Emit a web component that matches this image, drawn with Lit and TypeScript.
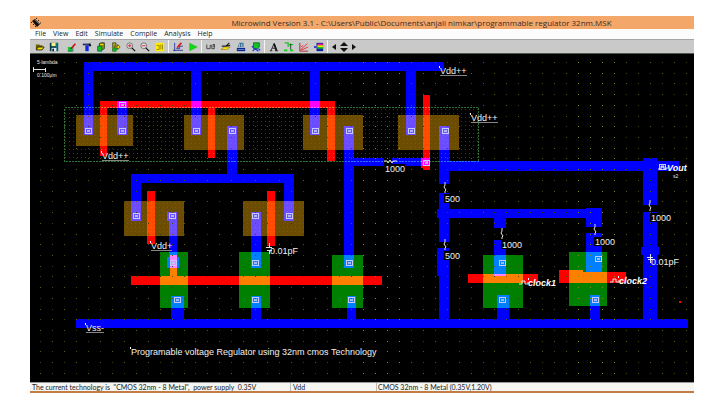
import { LitElement, html, svg, css } from "lit";
import { customElement } from "lit/decorators.js";

type Box = [number, number, number, number]; // left, top, right, bottom

const METAL: Box[] = [
  [84, 62, 444, 71], [84, 71, 93, 135], [191, 71, 201, 135], [310, 71, 320, 135], [406, 71, 416, 135],
  [117, 101, 127, 135], [227, 126, 237, 174],
  [344, 126, 354, 268], [354, 158, 384, 166], [392, 158, 430, 166],
  [439, 126, 449, 184], [449, 161, 679, 171],
  [439, 193, 449, 209], [437, 209, 586, 218], [439, 218, 449, 242], [437, 248, 449, 276], [439, 276, 449, 319],
  [494, 218, 506, 228], [494, 240, 506, 276], [497, 295, 509, 319],
  [586, 208, 602, 227], [586, 233, 602, 272], [590, 295, 600, 319],
  [643, 158, 657, 161], [643, 171, 657, 205], [643, 212, 657, 247], [641, 247, 659, 255], [643, 255, 657, 319],
  [131, 174, 294, 183], [131, 183, 141, 221], [284, 183, 294, 221],
  [167, 212, 177, 221], [169, 221, 177, 257], [167, 257, 179, 268], [251, 212, 261, 268],
  [171, 296, 184, 319], [251, 296, 261, 319], [347, 296, 356, 319],
  [76, 319, 688, 328],
];
const POLY: Box[] = [
  [100, 101, 335, 108], [100, 108, 107, 156], [208, 108, 215, 158], [327, 108, 335, 161],
  [423, 95, 430, 170], [421, 158, 423, 168],
  [147, 191, 155, 244], [267, 191, 275, 246],
  [131, 276, 382, 285], [170, 255, 177, 276],
  [468, 274, 538, 283], [559, 270, 583, 283], [583, 272, 626, 283],
  [679, 301, 681, 303],
];
const PDIFF: Box[] = [
  [76, 115, 133, 146], [184, 115, 244, 150], [303, 115, 363, 150], [398, 115, 459, 150],
  [124, 201, 184, 236], [243, 201, 304, 236],
];
const NDIFF: Box[] = [
  [160, 252, 188, 308], [239, 252, 270, 308], [332, 255, 363, 308], [483, 255, 523, 308], [569, 252, 607, 306],
];
const CONTACTS: [number, number][] = [
  [88, 131], [122, 131], [122, 105], [196, 131], [232, 131], [315, 131], [349, 131], [411, 131], [445, 131], [426, 163],
  [136, 216], [172, 216], [255, 216], [289, 216], [173, 263], [255, 263], [349, 263],
  [177, 300], [255, 300], [351, 300], [502, 263], [502, 300], [598, 259], [595, 300], [662, 167],
];
const SUPPLIES: [string, number, number, number][] = [
  ["Vdd++", 440, 74, 27], ["Vdd++", 471, 121, 27], ["Vdd++", 102, 159, 27], ["Vdd+", 151, 249, 21], ["Vss-", 86, 331, 18],
];
const VALUES: [string, number, number, number][] = [
  ["1000", 385, 172, 20], ["500", 445, 202, 15], ["500", 445, 259, 15], ["1000", 502, 248, 20],
  ["1000", 595, 245, 20], ["1000", 651, 221, 20],
];
const PLAIN: [string, number, number][] = [
  ["0.01pF", 270, 254], ["0.01pF", 651, 265], ["Programable voltage Regulator using 32nm cmos Technology", 131, 355],
];
const SIGNALS: [string, number, number][] = [["clock1", 528, 286], ["clock2", 619, 284], ["Vout", 667, 171]];
const ZIGZAGS: [number, number][] = [[445, 182], [445, 239], [502, 228], [595, 224], [650, 200]];

const MENUS = ["File", "View", "Edit", "Simulate", "Compile", "Analysis", "Help"];

// Each icon is drawn on a 12 x 12 grid.
const ICONS: Record<string, unknown> = {
  Open: svg`<path d="M1 3h4l1 1h3v2H5L3 9H1z" fill="#6b6400"/><path d="M3.500 6H11L8.500 9.500H1.500z" fill="#ffe600" stroke="#111"/>`,
  Save: svg`<path d="M1 1h10v10H1z" fill="#063c46"/><path d="M3 1h5v4H3z" fill="#f7f08a"/><path d="M3 7h6v4H3z" fill="#e8e8e8"/><path d="M9 1h1v9H9z" fill="#18b5c8"/><path d="M4 8h2v3H4z" fill="#123"/>`,
  Draw: svg`<path d="M1 6h5v5H1z" fill="#18c428"/><path d="M1 11h6V6" fill="none" stroke="#063"/><path d="M6 7l4-5" stroke="#d40c1c" stroke-width="2"/><path d="M4 8l2-1" stroke="#111"/>`,
  Delete: svg`<path d="M1 2h9l1 2v1H8V4H1z" fill="#111"/><path d="M2 2h6v1H2z" fill="#46d"/><path d="M4 4h4v7H4z" fill="#0b28e6"/><path d="M7 4l3-3" stroke="#333"/>`,
  Copy: svg`<path d="M4 2l2-1h4v7l-2 1H4z" fill="#9a9600" stroke="#232"/><path d="M2 5h5v6H2z" fill="#12c41e" stroke="#064"/><path d="M5 3h4" stroke="#ffe600"/>`,
  Move: svg`<path d="M2 1h4v10H2z" fill="#b4aa00" stroke="#443"/><path d="M2 7h5v4H2z" fill="#12b81e"/><path d="M4 5h4V3l3 3-3 3V7H4z" fill="#ffe600" stroke="#111" stroke-width=".7"/>`,
  "Zoom in": svg`<circle cx="4.500" cy="4.500" r="3.500" fill="#ddd" stroke="#666"/><path d="M2.500 4.500h4M4.500 2.500v4" stroke="#d4102a"/><path d="M7 7l4 4" stroke="#111" stroke-width="1.500"/>`,
  "Zoom out": svg`<circle cx="4.500" cy="4.500" r="3.500" fill="#ddd" stroke="#666"/><path d="M2.500 4.500h4" stroke="#d4102a"/><path d="M7 7l4 4" stroke="#111" stroke-width="1.500"/>`,
  "View all": svg`<path d="M1 1h10v10H1z" fill="#ffee00"/><path d="M2 4h3v5H2M7 3v6M9 3v6" fill="none" stroke="#8a7c00"/>`,
  Simulate: svg`<path d="M2 1v10M0 10h12M4 8h4V5h4" fill="none" stroke="#1a2c9a"/><path d="M5 7l5-6" stroke="#e01020" stroke-width="2"/>`,
  Run: svg`<path d="M2 1.500l9 4.500-9 4.500z" fill="#0cdc14" stroke="#1a9c20" stroke-width=".5"/>`,
  Measure: svg`<path d="M1 3v5h4V4h2v4M7 8h3M8 3h2v2H8M10 3v5" fill="none" stroke="#333"/>`,
  "Cut view": svg`<path d="M0 9l4-3h7L7 9z" fill="#ffe000" stroke="#665c00" stroke-width=".5"/><path d="M1 5h5l4-4M6 5l5-1" fill="none" stroke="#222" stroke-width="1.500"/>`,
  "3D view": svg`<path d="M2 6l2-5h5v5z" fill="#3a6f94"/><path d="M1 7h10v4H1z" fill="#10208c"/><path d="M4 2v4M7 2v4" stroke="#cde"/><path d="M2 9h8" stroke="#69c"/>`,
  Check: svg`<path d="M3 1h7v5l-2 2H3z" fill="#14c422" stroke="#063"/><path d="M1 5l2 2M2 11l3-3 4 3M9 8l2 2" stroke="#2334d8" fill="none" stroke-width="1.500"/>`,
  Text: svg`<path d="M1 10.500h3M7 10.500h4M2.500 10L6 2l3 8M4 7.500h4" fill="none" stroke="#111"/><path d="M6 2l3 8" stroke="#111" stroke-width="2"/>`,
  Layers: svg`<path d="M1 1h4v5M6 3h5" fill="none" stroke="#14c422" stroke-width="1.500"/><path d="M8 2v7" stroke="#222"/><path d="M0 9h4v2H0zM7 9h4v2H7z" fill="#12d41e"/>`,
  Graph: svg`<path d="M1 1v10h10" fill="none" stroke="#a01818"/><path d="M2 9l8-7M2 10l9-4M2 6l3-2" stroke="#f02030"/>`,
  Palette: svg`<path d="M3 1h8v10H3z" fill="#12269c"/><path d="M4 2h7v2H4z" fill="#e31d9a"/><path d="M4 4h7v2H4z" fill="#ffe600"/><path d="M4 6h7v2H4z" fill="#13c924"/><path d="M0 6h3" stroke="#22c" stroke-width="2"/>`,
};
const TOOL_GROUPS: string[][] = [
  ["Open", "Save"],
  ["Draw", "Delete", "Copy", "Move", "Zoom in", "Zoom out", "View all"],
  ["Simulate", "Run"],
  ["Measure", "Cut view", "3D view", "Check"],
  ["Text", "Layers", "Graph", "Palette"],
];

const boxes = (list: Box[], cls: string) =>
  list.map(([l, t, r, b]) => svg`<rect class=${cls} x=${l} y=${t} width=${r - l} height=${b - t}></rect>`);

const gridDots = () => {
  const tones = ["#3c4a10", "#5a5416", "#33420c", "#6a5a14"];
  const out = [];
  for (let row = 0; row < 30; row++) {
    for (let col = 0; col < 55; col++) {
      const x = 40 + Math.round(col * 11.96);
      const y = 62 + Math.round(row * 10.72);
      const bright = (col > 26 && col < 31) || (col > 44 && col < 49);
      out.push(svg`<rect x=${x} y=${y} width="1" height="1" fill=${bright ? "#8a8c1c" : tones[(col + row * 3) % 4]}></rect>`);
    }
  }
  return out;
};

@customElement("layout-canvas")
class LayoutCanvas extends LitElement {
  static styles = css`
    :host { display: block; background: #000; }
    .sheet { display: block; width: 100%; height: auto; font-family: "Liberation Sans", Arial, sans-serif; }
    .layer { isolation: isolate; shape-rendering: crispEdges; }
    .metal { fill: #0000ff; mix-blend-mode: screen; }
    .poly { fill: #ff0000; mix-blend-mode: screen; }
    .pdiff { fill: url(#speckle); }
    .ndiff { fill: #008000; }
    .well { fill: url(#wellDots); stroke: #2c7034; stroke-dasharray: 2 1; }
    .ink { fill: none; stroke: #e4e4e4; }
    .contact { fill: none; stroke: #c4ccff; }
    .cross { fill: none; stroke: #c4ccff; }
    .mask { fill: #000; }
    .rule { fill: #858585; }
    .label { fill: #f0f0f0; font-size: 9px; }
    .signal { fill: #fff; font-size: 9px; font-weight: bold; font-style: italic; }
    .scale { fill: #e8e8e8; font-size: 5px; }
    .tick { fill: #fff; }
  `;
  render() {
    return html`
      <svg class="sheet" viewBox="30 54 664 328" role="img" aria-label="Chip layout">
        <defs>
          <pattern id="wellDots" width="4" height="4" patternUnits="userSpaceOnUse">
            <rect x="1" y="1" width="1" height="1" fill="#164a1c"></rect>
          </pattern>
          <pattern id="speckle" width="4" height="4" patternUnits="userSpaceOnUse">
            <rect width="4" height="4" fill="#6c4c00"></rect>
            <rect x="1" y="1" width="1" height="1" fill="#8c3c10"></rect>
            <rect x="3" y="3" width="1" height="1" fill="#7c5c00"></rect>
          </pattern>
        </defs>
        <g class="layer">
          <rect class="mask" x="30" y="54" width="664" height="328"></rect>
          <rect class="well" x="64.5" y="107.5" width="414" height="54"></rect>
          ${boxes(PDIFF, "pdiff")}${boxes(NDIFF, "ndiff")}${boxes(METAL, "metal")}${boxes(POLY, "poly")}
          ${gridDots()}
        </g>
        ${CONTACTS.map(([x, y]) => svg`
          <rect class="contact" x=${x - 2.5} y=${y - 2.5} width="6" height="5"></rect>
          <path class="cross" d=${`M${x - 1} ${y - 1}l3 2m0-2l-3 2`}></path>`)}
        ${VALUES.map(([t, x, y, w]) => svg`
          <rect class="mask" x=${x - 1} y=${y - 8} width=${w + 1} height="9"></rect>
          <text class="label" x=${x} y=${y}>${t}</text>`)}
        ${ZIGZAGS.map(([x, y]) => svg`<path class="ink" d=${`M${x} ${y}v3l-1 2 2 3-1 1v2`}></path>`)}
        <path class="ink" d="M384 161h3l1 2 2-3 2 3 1-2h4"></path>
        ${SUPPLIES.map(([t, x, y, w]) => svg`
          <text class="label" x=${x} y=${y}>${t}</text>
          <rect class="rule" x=${x} y=${y + 1} width=${w} height="1"></rect>
          <rect class="tick" x=${x - 1} y=${y - 8} width="1" height="2"></rect>`)}
        ${PLAIN.map(([t, x, y]) => svg`
          <text class="label" x=${x} y=${y}>${t}</text>
          <rect class="tick" x=${x - 1} y=${y - 8} width="1" height="2"></rect>`)}
        <path class="ink" d="M266 247.500h6M267 250.500h5M269.500 243v4M269.500 251v3M647 257.500h6M648 259.500h5M650.500 254v4M650.500 260v3"></path>
        ${SIGNALS.map(([t, x, y]) => svg`
          <text class="signal" x=${x} y=${y}>${t}</text>
          <path class="ink" d=${`M${x - 9} ${y - 2}h3v-3h3v3h3v-2`}></path>`)}
        <rect class="tick" x="528" y="278" width="1" height="2"></rect>
        <rect class="tick" x="618" y="276" width="1" height="2"></rect>
        <text class="scale" x="673" y="178">s2</text>
        <text class="scale" x="37" y="64">5 lambda</text>
        <path class="ink" d="M33.500 67v5M45.500 68v4M34 69.500h11"></path>
        <text class="scale" x="37" y="77">0.100µm</text>
      </svg>`;
  }
}

@customElement("app-root")
class AppRoot extends LitElement {
  static styles = css`
    :host { display: block; background: #fff; font-family: "Open Sans", "Noto Sans", sans-serif; color: #1c1c1c; }
    .window { margin: 16px 11px 11px 30px; border-bottom: 2px solid #c27c46; }
    .title { display: flex; align-items: center; height: 13px; background: #f3a869; }
    .logo { width: 10px; height: 10px; margin-left: 1px; }
    .name { flex: 1; margin: 0; padding-left: 108px; text-align: center; font-size: 8px; line-height: 13px; font-weight: 400; white-space: nowrap; color: #3a2a2a; }
    .menu { display: flex; gap: 7px; padding-left: 5px; height: 10px; background: #fcfcfc; }
    .entry { border: 0; padding: 0; background: none; font: inherit; font-size: 7px; line-height: 10px; color: inherit; }
    .tools { display: flex; align-items: center; height: 13px; padding-left: 3px; background: #c9c9c9; border-top: 1px solid #a4a4a4; border-bottom: 1px solid #4c5c4c; }
    .group { display: flex; height: 13px; }
    .group + .group { border-left: 1px solid #f4f4f4; margin-left: 1px; padding-left: 1px; }
    .group.pair + .group.wide { border-left: 0; margin-left: 4px; padding-left: 0; }
    .group.wide { width: 102px; }
    .tool { flex: 1 0 14px; display: flex; align-items: center; justify-content: center; border: 0; padding: 0; background: none; }
    .group.full .tool { flex-basis: 15px; }
    .group.full.small .tool { flex-basis: 10px; }
    .icon { display: block; width: 10px; height: 10px; }
    .status { display: flex; height: 8px; background: #f5f5f2; border-top: 1px solid #9a9a9a; font-family: Lato, "Open Sans", sans-serif; font-size: 7px; line-height: 8px; white-space: nowrap; overflow: hidden; }
    .cell { padding-left: 2px; white-space: pre; }
    .cell + .cell { border-left: 1px solid #bcbcbc; }
    .tech { flex: 0 0 258px; }
    .net { flex: 0 0 83px; }
    .cell.rest { flex: 1; padding-left: 1px; }
  `;
  render() {
    const groupClass = ["pair", "wide", "full", "full", "full"];
    return html`
      <main class="window">
        <header class="title">
          <svg class="logo" viewBox="0 0 10 10" aria-hidden="true">
            <path d="M1 3l3-2 5 5-3 3z" fill="#111"></path>
            <path d="M1 4l-1 1M3 6l-1 1M5 8L4 9M5 1l1-1M7 3l1-1M9 5h1" stroke="#222"></path>
            <path d="M4 2l4 4" stroke="#6b6450"></path>
          </svg>
          <h1 class="name">Microwind Version 3.1 - C:\\Users\\Public\\Documents\\anjali nimkar\\programmable regulator 32nm.MSK</h1>
        </header>
        <nav class="menu">${MENUS.map((m) => html`<button class="entry">${m}</button>`)}</nav>
        <div class="tools" role="toolbar">
          ${TOOL_GROUPS.map((g, i) => html`<div class="group ${groupClass[i]}">
            ${g.map((n) => html`<button class="tool" aria-label=${n}><svg class="icon" viewBox="0 0 12 12">${ICONS[n]}</svg></button>`)}
          </div>`)}
          <div class="group full small">
            <button class="tool" aria-label="Pan left"><svg class="icon" viewBox="0 0 10 10"><path d="M7 2v6L3 5z" fill="#111"></path></svg></button>
            <button class="tool" aria-label="Pan up or down"><svg class="icon" viewBox="0 0 10 10"><path d="M1 4l4-4 4 4zM1 6h8l-4 4z" fill="#111"></path></svg></button>
            <button class="tool" aria-label="Pan right"><svg class="icon" viewBox="0 0 10 10"><path d="M3 2v6l4-3z" fill="#111"></path></svg></button>
          </div>
        </div>
        <layout-canvas></layout-canvas>
        <footer class="status">
          <span class="cell tech">The current technology is  "CMOS 32nm - 8 Metal",  power supply  0.35V</span>
          <span class="cell net">Vdd</span>
          <span class="cell rest">CMOS 32nm - 8 Metal (0.35V,1.20V)</span>
        </footer>
      </main>`;
  }
}
